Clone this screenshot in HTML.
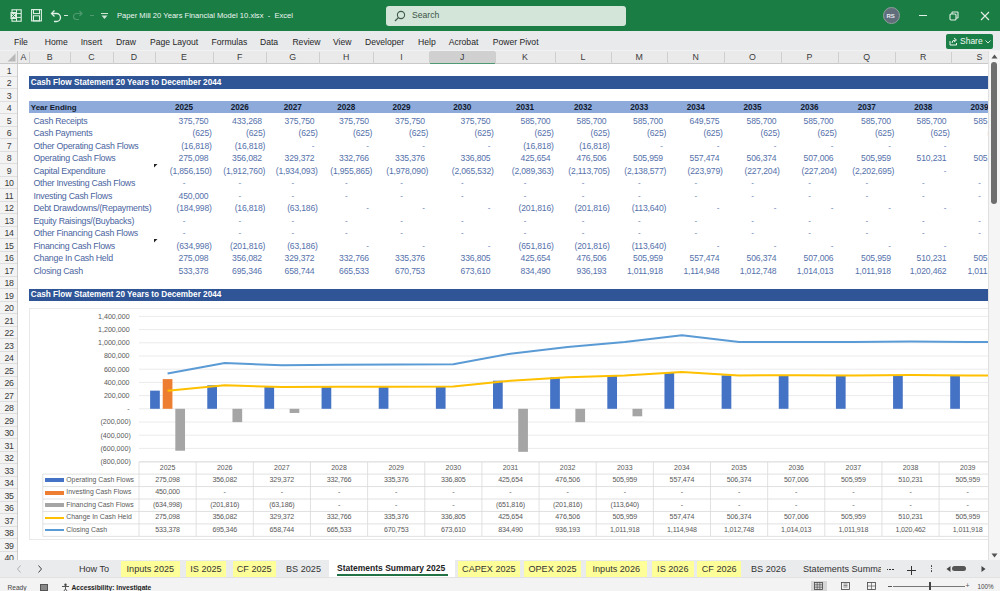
<!DOCTYPE html><html><head><meta charset="utf-8"><style>
*{margin:0;padding:0;box-sizing:border-box}
html,body{width:1000px;height:591px;overflow:hidden;background:#fff;font-family:"Liberation Sans",sans-serif}
.ab{position:absolute}
.t{position:absolute;white-space:pre;line-height:1}
</style></head><body>
<div class="ab" style="left:0;top:0;width:1000px;height:30.5px;background:#197d44"></div>
<svg class="ab" style="left:9px;top:9px" width="13" height="13" viewBox="0 0 13 13">
<rect x="3" y="0.8" width="9.2" height="11.4" fill="none" stroke="#dff0e5" stroke-width="1.1"/>
<line x1="7.5" y1="4.6" x2="12" y2="4.6" stroke="#dff0e5" stroke-width="1"/><line x1="7.5" y1="8.4" x2="12" y2="8.4" stroke="#dff0e5" stroke-width="1"/>
<line x1="7.5" y1="0.8" x2="7.5" y2="12.2" stroke="#dff0e5" stroke-width="1"/>
<rect x="1.5" y="3" width="6" height="7" fill="#dff0e5"/>
<path d="M3 4.8 L6 8.2 M6 4.8 L3 8.2" stroke="#197d44" stroke-width="1"/></svg>
<svg class="ab" style="left:31px;top:9px" width="11" height="12.5" viewBox="0 0 11 12.5">
<rect x="0.6" y="0.6" width="9.8" height="11.3" fill="none" stroke="#dff0e5" stroke-width="1.1"/>
<rect x="2.5" y="0.6" width="6" height="4" fill="none" stroke="#dff0e5" stroke-width="1"/>
<rect x="2.5" y="6.8" width="6" height="5.1" fill="none" stroke="#dff0e5" stroke-width="1"/></svg>
<svg class="ab" style="left:49.5px;top:9px" width="12" height="14" viewBox="0 0 12 14">
<path d="M2 4.5 H6.5 A4 4 0 0 1 6.5 12.5 H4" fill="none" stroke="#dff0e5" stroke-width="1.3"/>
<path d="M4.5 1.5 L1.5 4.5 L4.5 7.5" fill="none" stroke="#dff0e5" stroke-width="1.3"/></svg>
<div class="ab" style="left:64px;top:15px;width:3.5px;height:1px;background:#d8eadf"></div>
<svg class="ab" style="left:72px;top:9px" width="12" height="12" viewBox="0 0 12 12">
<path d="M9.5 4.5 H4.5 A3 3 0 0 0 4.5 10.5 H7" fill="none" stroke="#4f9a6e" stroke-width="1.2"/>
<path d="M7.5 2 L10 4.5 L7.5 7" fill="none" stroke="#4f9a6e" stroke-width="1.2"/></svg>
<div class="ab" style="left:90px;top:15px;width:3.5px;height:1px;background:#4f9a6e"></div>
<div class="ab" style="left:101px;top:12.5px;width:7px;height:1px;background:#cfe3d6"></div>
<svg class="ab" style="left:101px;top:14.5px" width="7" height="5" viewBox="0 0 7 5"><path d="M0.5 0.5 L3.5 4 L6.5 0.5Z" fill="#cfe3d6"/></svg>
<div class="t" style="left:117px;top:11.5px;font-size:7.6px;color:#eef6f1">Paper Mill 20 Years Financial Model 10.xlsx  -  Excel</div>
<div class="ab" style="left:385.5px;top:5.5px;width:240px;height:20px;background:#d3e4d9;border-radius:3px"></div>
<svg class="ab" style="left:394px;top:9.5px" width="12" height="12" viewBox="0 0 12 12">
<circle cx="7" cy="5" r="3.6" fill="none" stroke="#3d5a47" stroke-width="1.1"/><line x1="4.4" y1="7.6" x2="1" y2="11" stroke="#3d5a47" stroke-width="1.2"/></svg>
<div class="t" style="left:412px;top:11px;font-size:8.6px;color:#3b5545">Search</div>
<div class="ab" style="left:882.5px;top:7px;width:17px;height:17px;border-radius:50%;background:#5f6e7a;border:1.5px solid #8fa19a"></div>
<div class="t" style="left:886.5px;top:12.5px;font-size:6px;color:#e6ecef;font-weight:bold">RS</div>
<div class="ab" style="left:918.5px;top:15px;width:8px;height:1px;background:#e3f0e8"></div>
<svg class="ab" style="left:949px;top:10.5px" width="10" height="10" viewBox="0 0 10 10">
<rect x="1" y="3" width="6" height="6" fill="none" stroke="#e3f0e8" stroke-width="1.1" rx="1"/>
<path d="M3 3 V1.5 Q3 1 3.5 1 H8.5 Q9 1 9 1.5 V6.5 Q9 7 8.5 7 H7" fill="none" stroke="#e3f0e8" stroke-width="1.1"/></svg>
<svg class="ab" style="left:980px;top:10.5px" width="10" height="10" viewBox="0 0 10 10">
<path d="M1 1 L9 9 M9 1 L1 9" stroke="#e3f0e8" stroke-width="1.1"/></svg>
<div class="ab" style="left:0;top:30.5px;width:1000px;height:20.5px;background:#e9eaec"></div>
<div class="t" style="left:14px;top:37.6px;font-size:8.6px;color:#262626">File</div>
<div class="t" style="left:44.8px;top:37.6px;font-size:8.6px;color:#262626">Home</div>
<div class="t" style="left:80.7px;top:37.6px;font-size:8.6px;color:#262626">Insert</div>
<div class="t" style="left:116px;top:37.6px;font-size:8.6px;color:#262626">Draw</div>
<div class="t" style="left:150px;top:37.6px;font-size:8.6px;color:#262626">Page Layout</div>
<div class="t" style="left:211.5px;top:37.6px;font-size:8.6px;color:#262626">Formulas</div>
<div class="t" style="left:260px;top:37.6px;font-size:8.6px;color:#262626">Data</div>
<div class="t" style="left:292.4px;top:37.6px;font-size:8.6px;color:#262626">Review</div>
<div class="t" style="left:333px;top:37.6px;font-size:8.6px;color:#262626">View</div>
<div class="t" style="left:365px;top:37.6px;font-size:8.6px;color:#262626">Developer</div>
<div class="t" style="left:418px;top:37.6px;font-size:8.6px;color:#262626">Help</div>
<div class="t" style="left:448.7px;top:37.6px;font-size:8.6px;color:#262626">Acrobat</div>
<div class="t" style="left:492.7px;top:37.6px;font-size:8.6px;color:#262626">Power Pivot</div>
<div class="ab" style="left:946px;top:33.5px;width:46.5px;height:15px;background:#1a7f46;border-radius:2px"></div>
<svg class="ab" style="left:949px;top:36.5px" width="9" height="9" viewBox="0 0 9 9">
<path d="M1 4 V8 H7.5 V6" fill="none" stroke="#e9f4ed" stroke-width="1"/><path d="M3 6 Q3 3 6.5 3 M5 1 L7.5 3 L5 5" fill="none" stroke="#e9f4ed" stroke-width="1"/></svg>
<div class="t" style="left:960px;top:37px;font-size:8.5px;color:#f3faf5">Share</div>
<svg class="ab" style="left:985px;top:39.5px" width="6" height="4" viewBox="0 0 6 4"><path d="M0.5 0.5 L3 3 L5.5 0.5" fill="none" stroke="#e9f4ed" stroke-width="0.9"/></svg>
<div class="ab" style="left:0;top:49.5px;width:1000px;height:14.25px;background:#eaeaea;border-top:1.2px solid #f2f2f2;border-bottom:0.8px solid #c9c9c9"></div>
<svg class="ab" style="left:7px;top:53px" width="9" height="9" viewBox="0 0 9 9"><path d="M8.5 0.5 V8.5 H0.5Z" fill="#b8b8b8"/></svg>
<div class="ab" style="left:17px;top:51px;width:0.8px;height:12.75px;background:#c6c6c6"></div>
<div class="ab" style="left:28.9px;top:52px;width:0.8px;height:11.5px;background:#cfcfcf"></div>
<div class="t" style="left:17.5px;width:11.899999999999999px;text-align:center;top:53.2px;font-size:8.8px;color:#3a3a3a">A</div>
<div class="ab" style="left:69.5px;top:52px;width:0.8px;height:11.5px;background:#cfcfcf"></div>
<div class="t" style="left:29.4px;width:40.6px;text-align:center;top:53.2px;font-size:8.8px;color:#3a3a3a">B</div>
<div class="ab" style="left:112.5px;top:52px;width:0.8px;height:11.5px;background:#cfcfcf"></div>
<div class="t" style="left:70px;width:43px;text-align:center;top:53.2px;font-size:8.8px;color:#3a3a3a">C</div>
<div class="ab" style="left:154.5px;top:52px;width:0.8px;height:11.5px;background:#cfcfcf"></div>
<div class="t" style="left:113px;width:42px;text-align:center;top:53.2px;font-size:8.8px;color:#3a3a3a">D</div>
<div class="ab" style="left:212.5px;top:52px;width:0.8px;height:11.5px;background:#cfcfcf"></div>
<div class="t" style="left:155px;width:58px;text-align:center;top:53.2px;font-size:8.8px;color:#3a3a3a">E</div>
<div class="ab" style="left:266.0px;top:52px;width:0.8px;height:11.5px;background:#cfcfcf"></div>
<div class="t" style="left:213px;width:53.5px;text-align:center;top:53.2px;font-size:8.8px;color:#3a3a3a">F</div>
<div class="ab" style="left:318.5px;top:52px;width:0.8px;height:11.5px;background:#cfcfcf"></div>
<div class="t" style="left:266.5px;width:52.5px;text-align:center;top:53.2px;font-size:8.8px;color:#3a3a3a">G</div>
<div class="ab" style="left:373.0px;top:52px;width:0.8px;height:11.5px;background:#cfcfcf"></div>
<div class="t" style="left:319px;width:54.5px;text-align:center;top:53.2px;font-size:8.8px;color:#3a3a3a">H</div>
<div class="ab" style="left:429.0px;top:52px;width:0.8px;height:11.5px;background:#cfcfcf"></div>
<div class="t" style="left:373.5px;width:56.0px;text-align:center;top:53.2px;font-size:8.8px;color:#3a3a3a">I</div>
<div class="ab" style="left:429.5px;top:51px;width:65.5px;height:12.75px;background:#d0d0d0;border-bottom:1.6px solid #4f9a72"></div>
<div class="ab" style="left:494.5px;top:52px;width:0.8px;height:11.5px;background:#cfcfcf"></div>
<div class="t" style="left:429.5px;width:65.5px;text-align:center;top:53.2px;font-size:8.8px;color:#3a3a3a">J</div>
<div class="ab" style="left:554.5px;top:52px;width:0.8px;height:11.5px;background:#cfcfcf"></div>
<div class="t" style="left:495px;width:60px;text-align:center;top:53.2px;font-size:8.8px;color:#3a3a3a">K</div>
<div class="ab" style="left:610.5px;top:52px;width:0.8px;height:11.5px;background:#cfcfcf"></div>
<div class="t" style="left:555px;width:56px;text-align:center;top:53.2px;font-size:8.8px;color:#3a3a3a">L</div>
<div class="ab" style="left:667.0px;top:52px;width:0.8px;height:11.5px;background:#cfcfcf"></div>
<div class="t" style="left:611px;width:56.5px;text-align:center;top:53.2px;font-size:8.8px;color:#3a3a3a">M</div>
<div class="ab" style="left:723.5px;top:52px;width:0.8px;height:11.5px;background:#cfcfcf"></div>
<div class="t" style="left:667.5px;width:56.5px;text-align:center;top:53.2px;font-size:8.8px;color:#3a3a3a">N</div>
<div class="ab" style="left:780.5px;top:52px;width:0.8px;height:11.5px;background:#cfcfcf"></div>
<div class="t" style="left:724px;width:57px;text-align:center;top:53.2px;font-size:8.8px;color:#3a3a3a">O</div>
<div class="ab" style="left:837.5px;top:52px;width:0.8px;height:11.5px;background:#cfcfcf"></div>
<div class="t" style="left:781px;width:57px;text-align:center;top:53.2px;font-size:8.8px;color:#3a3a3a">P</div>
<div class="ab" style="left:895.0px;top:52px;width:0.8px;height:11.5px;background:#cfcfcf"></div>
<div class="t" style="left:838px;width:57.5px;text-align:center;top:53.2px;font-size:8.8px;color:#3a3a3a">Q</div>
<div class="ab" style="left:950.5px;top:52px;width:0.8px;height:11.5px;background:#cfcfcf"></div>
<div class="t" style="left:895.5px;width:55.5px;text-align:center;top:53.2px;font-size:8.8px;color:#3a3a3a">R</div>
<div class="ab" style="left:1007.5px;top:52px;width:0.8px;height:11.5px;background:#cfcfcf"></div>
<div class="t" style="left:951px;width:57px;text-align:center;top:53.2px;font-size:8.8px;color:#3a3a3a">S</div>
<div class="ab" style="left:0;top:63.75px;width:17.5px;height:496px;background:#f3f3f3;border-right:0.8px solid #cdcdcd"></div>
<div class="ab" style="left:0;top:75.75px;width:17px;height:0.7px;background:#dedede"></div>
<div class="t" style="left:0.5px;width:17px;text-align:center;top:66.65px;font-size:8.8px;letter-spacing:-0.4px;color:#3a3a3a">1</div>
<div class="ab" style="left:0;top:88.25px;width:17px;height:0.7px;background:#dedede"></div>
<div class="t" style="left:0.5px;width:17px;text-align:center;top:79.15px;font-size:8.8px;letter-spacing:-0.4px;color:#3a3a3a">2</div>
<div class="ab" style="left:0;top:100.75px;width:17px;height:0.7px;background:#dedede"></div>
<div class="t" style="left:0.5px;width:17px;text-align:center;top:91.65px;font-size:8.8px;letter-spacing:-0.4px;color:#3a3a3a">3</div>
<div class="ab" style="left:0;top:113.25px;width:17px;height:0.7px;background:#dedede"></div>
<div class="t" style="left:0.5px;width:17px;text-align:center;top:104.15px;font-size:8.8px;letter-spacing:-0.4px;color:#3a3a3a">4</div>
<div class="ab" style="left:0;top:125.75px;width:17px;height:0.7px;background:#dedede"></div>
<div class="t" style="left:0.5px;width:17px;text-align:center;top:116.65px;font-size:8.8px;letter-spacing:-0.4px;color:#3a3a3a">5</div>
<div class="ab" style="left:0;top:138.25px;width:17px;height:0.7px;background:#dedede"></div>
<div class="t" style="left:0.5px;width:17px;text-align:center;top:129.15px;font-size:8.8px;letter-spacing:-0.4px;color:#3a3a3a">6</div>
<div class="ab" style="left:0;top:150.75px;width:17px;height:0.7px;background:#dedede"></div>
<div class="t" style="left:0.5px;width:17px;text-align:center;top:141.65px;font-size:8.8px;letter-spacing:-0.4px;color:#3a3a3a">7</div>
<div class="ab" style="left:0;top:163.25px;width:17px;height:0.7px;background:#dedede"></div>
<div class="t" style="left:0.5px;width:17px;text-align:center;top:154.15px;font-size:8.8px;letter-spacing:-0.4px;color:#3a3a3a">8</div>
<div class="ab" style="left:0;top:175.75px;width:17px;height:0.7px;background:#dedede"></div>
<div class="t" style="left:0.5px;width:17px;text-align:center;top:166.65px;font-size:8.8px;letter-spacing:-0.4px;color:#3a3a3a">9</div>
<div class="ab" style="left:0;top:188.25px;width:17px;height:0.7px;background:#dedede"></div>
<div class="t" style="left:0.5px;width:17px;text-align:center;top:179.15px;font-size:8.8px;letter-spacing:-0.4px;color:#3a3a3a">10</div>
<div class="ab" style="left:0;top:200.75px;width:17px;height:0.7px;background:#dedede"></div>
<div class="t" style="left:0.5px;width:17px;text-align:center;top:191.65px;font-size:8.8px;letter-spacing:-0.4px;color:#3a3a3a">11</div>
<div class="ab" style="left:0;top:213.25px;width:17px;height:0.7px;background:#dedede"></div>
<div class="t" style="left:0.5px;width:17px;text-align:center;top:204.15px;font-size:8.8px;letter-spacing:-0.4px;color:#3a3a3a">12</div>
<div class="ab" style="left:0;top:225.75px;width:17px;height:0.7px;background:#dedede"></div>
<div class="t" style="left:0.5px;width:17px;text-align:center;top:216.65px;font-size:8.8px;letter-spacing:-0.4px;color:#3a3a3a">13</div>
<div class="ab" style="left:0;top:238.25px;width:17px;height:0.7px;background:#dedede"></div>
<div class="t" style="left:0.5px;width:17px;text-align:center;top:229.15px;font-size:8.8px;letter-spacing:-0.4px;color:#3a3a3a">14</div>
<div class="ab" style="left:0;top:250.75px;width:17px;height:0.7px;background:#dedede"></div>
<div class="t" style="left:0.5px;width:17px;text-align:center;top:241.65px;font-size:8.8px;letter-spacing:-0.4px;color:#3a3a3a">15</div>
<div class="ab" style="left:0;top:263.25px;width:17px;height:0.7px;background:#dedede"></div>
<div class="t" style="left:0.5px;width:17px;text-align:center;top:254.15px;font-size:8.8px;letter-spacing:-0.4px;color:#3a3a3a">16</div>
<div class="ab" style="left:0;top:275.75px;width:17px;height:0.7px;background:#dedede"></div>
<div class="t" style="left:0.5px;width:17px;text-align:center;top:266.65px;font-size:8.8px;letter-spacing:-0.4px;color:#3a3a3a">17</div>
<div class="ab" style="left:0;top:288.25px;width:17px;height:0.7px;background:#dedede"></div>
<div class="t" style="left:0.5px;width:17px;text-align:center;top:279.15px;font-size:8.8px;letter-spacing:-0.4px;color:#3a3a3a">18</div>
<div class="ab" style="left:0;top:300.75px;width:17px;height:0.7px;background:#dedede"></div>
<div class="t" style="left:0.5px;width:17px;text-align:center;top:291.65px;font-size:8.8px;letter-spacing:-0.4px;color:#3a3a3a">19</div>
<div class="ab" style="left:0;top:313.25px;width:17px;height:0.7px;background:#dedede"></div>
<div class="t" style="left:0.5px;width:17px;text-align:center;top:304.15px;font-size:8.8px;letter-spacing:-0.4px;color:#3a3a3a">20</div>
<div class="ab" style="left:0;top:325.75px;width:17px;height:0.7px;background:#dedede"></div>
<div class="t" style="left:0.5px;width:17px;text-align:center;top:316.65px;font-size:8.8px;letter-spacing:-0.4px;color:#3a3a3a">21</div>
<div class="ab" style="left:0;top:338.25px;width:17px;height:0.7px;background:#dedede"></div>
<div class="t" style="left:0.5px;width:17px;text-align:center;top:329.15px;font-size:8.8px;letter-spacing:-0.4px;color:#3a3a3a">22</div>
<div class="ab" style="left:0;top:350.75px;width:17px;height:0.7px;background:#dedede"></div>
<div class="t" style="left:0.5px;width:17px;text-align:center;top:341.65px;font-size:8.8px;letter-spacing:-0.4px;color:#3a3a3a">23</div>
<div class="ab" style="left:0;top:363.25px;width:17px;height:0.7px;background:#dedede"></div>
<div class="t" style="left:0.5px;width:17px;text-align:center;top:354.15px;font-size:8.8px;letter-spacing:-0.4px;color:#3a3a3a">24</div>
<div class="ab" style="left:0;top:375.75px;width:17px;height:0.7px;background:#dedede"></div>
<div class="t" style="left:0.5px;width:17px;text-align:center;top:366.65px;font-size:8.8px;letter-spacing:-0.4px;color:#3a3a3a">25</div>
<div class="ab" style="left:0;top:388.25px;width:17px;height:0.7px;background:#dedede"></div>
<div class="t" style="left:0.5px;width:17px;text-align:center;top:379.15px;font-size:8.8px;letter-spacing:-0.4px;color:#3a3a3a">26</div>
<div class="ab" style="left:0;top:400.75px;width:17px;height:0.7px;background:#dedede"></div>
<div class="t" style="left:0.5px;width:17px;text-align:center;top:391.65px;font-size:8.8px;letter-spacing:-0.4px;color:#3a3a3a">27</div>
<div class="ab" style="left:0;top:413.25px;width:17px;height:0.7px;background:#dedede"></div>
<div class="t" style="left:0.5px;width:17px;text-align:center;top:404.15px;font-size:8.8px;letter-spacing:-0.4px;color:#3a3a3a">28</div>
<div class="ab" style="left:0;top:425.75px;width:17px;height:0.7px;background:#dedede"></div>
<div class="t" style="left:0.5px;width:17px;text-align:center;top:416.65px;font-size:8.8px;letter-spacing:-0.4px;color:#3a3a3a">29</div>
<div class="ab" style="left:0;top:438.25px;width:17px;height:0.7px;background:#dedede"></div>
<div class="t" style="left:0.5px;width:17px;text-align:center;top:429.15px;font-size:8.8px;letter-spacing:-0.4px;color:#3a3a3a">30</div>
<div class="ab" style="left:0;top:450.75px;width:17px;height:0.7px;background:#dedede"></div>
<div class="t" style="left:0.5px;width:17px;text-align:center;top:441.65px;font-size:8.8px;letter-spacing:-0.4px;color:#3a3a3a">31</div>
<div class="ab" style="left:0;top:463.25px;width:17px;height:0.7px;background:#dedede"></div>
<div class="t" style="left:0.5px;width:17px;text-align:center;top:454.15px;font-size:8.8px;letter-spacing:-0.4px;color:#3a3a3a">32</div>
<div class="ab" style="left:0;top:475.75px;width:17px;height:0.7px;background:#dedede"></div>
<div class="t" style="left:0.5px;width:17px;text-align:center;top:466.65px;font-size:8.8px;letter-spacing:-0.4px;color:#3a3a3a">33</div>
<div class="ab" style="left:0;top:488.25px;width:17px;height:0.7px;background:#dedede"></div>
<div class="t" style="left:0.5px;width:17px;text-align:center;top:479.15px;font-size:8.8px;letter-spacing:-0.4px;color:#3a3a3a">34</div>
<div class="ab" style="left:0;top:500.75px;width:17px;height:0.7px;background:#dedede"></div>
<div class="t" style="left:0.5px;width:17px;text-align:center;top:491.65px;font-size:8.8px;letter-spacing:-0.4px;color:#3a3a3a">35</div>
<div class="ab" style="left:0;top:513.25px;width:17px;height:0.7px;background:#dedede"></div>
<div class="t" style="left:0.5px;width:17px;text-align:center;top:504.15px;font-size:8.8px;letter-spacing:-0.4px;color:#3a3a3a">36</div>
<div class="ab" style="left:0;top:525.75px;width:17px;height:0.7px;background:#dedede"></div>
<div class="t" style="left:0.5px;width:17px;text-align:center;top:516.65px;font-size:8.8px;letter-spacing:-0.4px;color:#3a3a3a">37</div>
<div class="ab" style="left:0;top:538.25px;width:17px;height:0.7px;background:#dedede"></div>
<div class="t" style="left:0.5px;width:17px;text-align:center;top:529.15px;font-size:8.8px;letter-spacing:-0.4px;color:#3a3a3a">38</div>
<div class="ab" style="left:0;top:550.75px;width:17px;height:0.7px;background:#dedede"></div>
<div class="t" style="left:0.5px;width:17px;text-align:center;top:541.65px;font-size:8.8px;letter-spacing:-0.4px;color:#3a3a3a">39</div>
<div class="ab" style="left:0;top:563.25px;width:17px;height:0.7px;background:#dedede"></div>
<div class="t" style="left:0.5px;width:17px;text-align:center;top:554.15px;font-size:8.8px;letter-spacing:-0.4px;color:#3a3a3a">40</div>
<div class="ab" style="left:17.8px;top:63.75px;width:970px;height:496px;overflow:hidden">
<div class="ab" style="left:11.2px;top:12.5px;width:980px;height:12.5px;background:#2f5597"></div>
<div class="t" style="left:13.0px;top:15.1px;font-size:8.2px;font-weight:bold;color:#fff">Cash Flow Statement 20 Years to December 2044</div>
<div class="ab" style="left:11.2px;top:37.5px;width:980px;height:11.8px;background:#8eaadb"></div>
<div class="t" style="left:13.0px;top:40.1px;font-size:7.95px;font-weight:bold;color:#111a2e">Year Ending</div>
<div class="t" style="left:137.2px;width:58px;text-align:center;top:40.1px;font-size:8.2px;font-weight:bold;color:#111a2e">2025</div>
<div class="t" style="left:195.2px;width:53.5px;text-align:center;top:40.1px;font-size:8.2px;font-weight:bold;color:#111a2e">2026</div>
<div class="t" style="left:248.7px;width:52.5px;text-align:center;top:40.1px;font-size:8.2px;font-weight:bold;color:#111a2e">2027</div>
<div class="t" style="left:301.2px;width:54.5px;text-align:center;top:40.1px;font-size:8.2px;font-weight:bold;color:#111a2e">2028</div>
<div class="t" style="left:355.7px;width:56.0px;text-align:center;top:40.1px;font-size:8.2px;font-weight:bold;color:#111a2e">2029</div>
<div class="t" style="left:411.7px;width:65.5px;text-align:center;top:40.1px;font-size:8.2px;font-weight:bold;color:#111a2e">2030</div>
<div class="t" style="left:477.2px;width:60px;text-align:center;top:40.1px;font-size:8.2px;font-weight:bold;color:#111a2e">2031</div>
<div class="t" style="left:537.2px;width:56px;text-align:center;top:40.1px;font-size:8.2px;font-weight:bold;color:#111a2e">2032</div>
<div class="t" style="left:593.2px;width:56.5px;text-align:center;top:40.1px;font-size:8.2px;font-weight:bold;color:#111a2e">2033</div>
<div class="t" style="left:649.7px;width:56.5px;text-align:center;top:40.1px;font-size:8.2px;font-weight:bold;color:#111a2e">2034</div>
<div class="t" style="left:706.2px;width:57px;text-align:center;top:40.1px;font-size:8.2px;font-weight:bold;color:#111a2e">2035</div>
<div class="t" style="left:763.2px;width:57px;text-align:center;top:40.1px;font-size:8.2px;font-weight:bold;color:#111a2e">2036</div>
<div class="t" style="left:820.2px;width:57.5px;text-align:center;top:40.1px;font-size:8.2px;font-weight:bold;color:#111a2e">2037</div>
<div class="t" style="left:877.7px;width:55.5px;text-align:center;top:40.1px;font-size:8.2px;font-weight:bold;color:#111a2e">2038</div>
<div class="t" style="left:933.2px;width:57px;text-align:center;top:40.1px;font-size:8.2px;font-weight:bold;color:#111a2e">2039</div>
<div class="t" style="left:15.7px;top:52.9px;width:118.30000000000001px;height:11px;overflow:hidden;font-size:8.8px;letter-spacing:-0.25px;color:#4a64a0">Cash Receipts</div>
<div class="t" style="left:127.19999999999999px;width:63.5px;text-align:right;top:52.9px;font-size:8.6px;letter-spacing:-0.17px;color:#5571ab">375,750</div>
<div class="t" style="left:185.2px;width:59.0px;text-align:right;top:52.9px;font-size:8.6px;letter-spacing:-0.17px;color:#5571ab">433,268</div>
<div class="t" style="left:238.7px;width:58.0px;text-align:right;top:52.9px;font-size:8.6px;letter-spacing:-0.17px;color:#5571ab">375,750</div>
<div class="t" style="left:291.2px;width:60.0px;text-align:right;top:52.9px;font-size:8.6px;letter-spacing:-0.17px;color:#5571ab">375,750</div>
<div class="t" style="left:345.7px;width:61.5px;text-align:right;top:52.9px;font-size:8.6px;letter-spacing:-0.17px;color:#5571ab">375,750</div>
<div class="t" style="left:401.7px;width:71.0px;text-align:right;top:52.9px;font-size:8.6px;letter-spacing:-0.17px;color:#5571ab">375,750</div>
<div class="t" style="left:467.2px;width:65.5px;text-align:right;top:52.9px;font-size:8.6px;letter-spacing:-0.17px;color:#5571ab">585,700</div>
<div class="t" style="left:527.2px;width:61.5px;text-align:right;top:52.9px;font-size:8.6px;letter-spacing:-0.17px;color:#5571ab">585,700</div>
<div class="t" style="left:583.2px;width:62.0px;text-align:right;top:52.9px;font-size:8.6px;letter-spacing:-0.17px;color:#5571ab">585,700</div>
<div class="t" style="left:639.7px;width:62.0px;text-align:right;top:52.9px;font-size:8.6px;letter-spacing:-0.17px;color:#5571ab">649,575</div>
<div class="t" style="left:696.2px;width:62.5px;text-align:right;top:52.9px;font-size:8.6px;letter-spacing:-0.17px;color:#5571ab">585,700</div>
<div class="t" style="left:753.2px;width:62.5px;text-align:right;top:52.9px;font-size:8.6px;letter-spacing:-0.17px;color:#5571ab">585,700</div>
<div class="t" style="left:810.2px;width:63.0px;text-align:right;top:52.9px;font-size:8.6px;letter-spacing:-0.17px;color:#5571ab">585,700</div>
<div class="t" style="left:867.7px;width:61.0px;text-align:right;top:52.9px;font-size:8.6px;letter-spacing:-0.17px;color:#5571ab">585,700</div>
<div class="t" style="left:923.2px;width:62.5px;text-align:right;top:52.9px;font-size:8.6px;letter-spacing:-0.17px;color:#5571ab">585,700</div>
<div class="t" style="left:15.7px;top:65.4px;width:118.30000000000001px;height:11px;overflow:hidden;font-size:8.8px;letter-spacing:-0.25px;color:#4a64a0">Cash Payments</div>
<div class="t" style="left:127.19999999999999px;width:66.8px;text-align:right;top:65.4px;font-size:8.6px;letter-spacing:-0.17px;color:#5571ab">(625)</div>
<div class="t" style="left:185.2px;width:62.3px;text-align:right;top:65.4px;font-size:8.6px;letter-spacing:-0.17px;color:#5571ab">(625)</div>
<div class="t" style="left:238.7px;width:61.3px;text-align:right;top:65.4px;font-size:8.6px;letter-spacing:-0.17px;color:#5571ab">(625)</div>
<div class="t" style="left:291.2px;width:63.3px;text-align:right;top:65.4px;font-size:8.6px;letter-spacing:-0.17px;color:#5571ab">(625)</div>
<div class="t" style="left:345.7px;width:64.8px;text-align:right;top:65.4px;font-size:8.6px;letter-spacing:-0.17px;color:#5571ab">(625)</div>
<div class="t" style="left:401.7px;width:74.3px;text-align:right;top:65.4px;font-size:8.6px;letter-spacing:-0.17px;color:#5571ab">(625)</div>
<div class="t" style="left:467.2px;width:68.8px;text-align:right;top:65.4px;font-size:8.6px;letter-spacing:-0.17px;color:#5571ab">(625)</div>
<div class="t" style="left:527.2px;width:64.8px;text-align:right;top:65.4px;font-size:8.6px;letter-spacing:-0.17px;color:#5571ab">(625)</div>
<div class="t" style="left:583.2px;width:65.3px;text-align:right;top:65.4px;font-size:8.6px;letter-spacing:-0.17px;color:#5571ab">(625)</div>
<div class="t" style="left:639.7px;width:65.3px;text-align:right;top:65.4px;font-size:8.6px;letter-spacing:-0.17px;color:#5571ab">(625)</div>
<div class="t" style="left:696.2px;width:65.8px;text-align:right;top:65.4px;font-size:8.6px;letter-spacing:-0.17px;color:#5571ab">(625)</div>
<div class="t" style="left:753.2px;width:65.8px;text-align:right;top:65.4px;font-size:8.6px;letter-spacing:-0.17px;color:#5571ab">(625)</div>
<div class="t" style="left:810.2px;width:66.3px;text-align:right;top:65.4px;font-size:8.6px;letter-spacing:-0.17px;color:#5571ab">(625)</div>
<div class="t" style="left:867.7px;width:64.3px;text-align:right;top:65.4px;font-size:8.6px;letter-spacing:-0.17px;color:#5571ab">(625)</div>
<div class="t" style="left:923.2px;width:65.8px;text-align:right;top:65.4px;font-size:8.6px;letter-spacing:-0.17px;color:#5571ab">(625)</div>
<div class="t" style="left:15.7px;top:77.9px;width:118.30000000000001px;height:11px;overflow:hidden;font-size:8.8px;letter-spacing:-0.25px;color:#4a64a0">Other Operating Cash Flows</div>
<div class="t" style="left:127.19999999999999px;width:66.8px;text-align:right;top:77.9px;font-size:8.6px;letter-spacing:-0.17px;color:#5571ab">(16,818)</div>
<div class="t" style="left:185.2px;width:62.3px;text-align:right;top:77.9px;font-size:8.6px;letter-spacing:-0.17px;color:#5571ab">(16,818)</div>
<div class="t" style="left:248.7px;width:48.0px;text-align:right;top:77.9px;font-size:8px;color:#5571ab">-</div>
<div class="t" style="left:301.2px;width:50.0px;text-align:right;top:77.9px;font-size:8px;color:#5571ab">-</div>
<div class="t" style="left:355.7px;width:51.5px;text-align:right;top:77.9px;font-size:8px;color:#5571ab">-</div>
<div class="t" style="left:411.7px;width:61.0px;text-align:right;top:77.9px;font-size:8px;color:#5571ab">-</div>
<div class="t" style="left:467.2px;width:68.8px;text-align:right;top:77.9px;font-size:8.6px;letter-spacing:-0.17px;color:#5571ab">(16,818)</div>
<div class="t" style="left:527.2px;width:64.8px;text-align:right;top:77.9px;font-size:8.6px;letter-spacing:-0.17px;color:#5571ab">(16,818)</div>
<div class="t" style="left:593.2px;width:52.0px;text-align:right;top:77.9px;font-size:8px;color:#5571ab">-</div>
<div class="t" style="left:649.7px;width:52.0px;text-align:right;top:77.9px;font-size:8px;color:#5571ab">-</div>
<div class="t" style="left:706.2px;width:52.5px;text-align:right;top:77.9px;font-size:8px;color:#5571ab">-</div>
<div class="t" style="left:763.2px;width:52.5px;text-align:right;top:77.9px;font-size:8px;color:#5571ab">-</div>
<div class="t" style="left:820.2px;width:53.0px;text-align:right;top:77.9px;font-size:8px;color:#5571ab">-</div>
<div class="t" style="left:877.7px;width:51.0px;text-align:right;top:77.9px;font-size:8px;color:#5571ab">-</div>
<div class="t" style="left:933.2px;width:52.5px;text-align:right;top:77.9px;font-size:8px;color:#5571ab">-</div>
<div class="t" style="left:15.7px;top:90.4px;width:118.30000000000001px;height:11px;overflow:hidden;font-size:8.8px;letter-spacing:-0.25px;color:#4a64a0">Operating Cash Flows</div>
<div class="t" style="left:127.19999999999999px;width:63.5px;text-align:right;top:90.4px;font-size:8.6px;letter-spacing:-0.17px;color:#5571ab">275,098</div>
<div class="t" style="left:185.2px;width:59.0px;text-align:right;top:90.4px;font-size:8.6px;letter-spacing:-0.17px;color:#5571ab">356,082</div>
<div class="t" style="left:238.7px;width:58.0px;text-align:right;top:90.4px;font-size:8.6px;letter-spacing:-0.17px;color:#5571ab">329,372</div>
<div class="t" style="left:291.2px;width:60.0px;text-align:right;top:90.4px;font-size:8.6px;letter-spacing:-0.17px;color:#5571ab">332,766</div>
<div class="t" style="left:345.7px;width:61.5px;text-align:right;top:90.4px;font-size:8.6px;letter-spacing:-0.17px;color:#5571ab">335,376</div>
<div class="t" style="left:401.7px;width:71.0px;text-align:right;top:90.4px;font-size:8.6px;letter-spacing:-0.17px;color:#5571ab">336,805</div>
<div class="t" style="left:467.2px;width:65.5px;text-align:right;top:90.4px;font-size:8.6px;letter-spacing:-0.17px;color:#5571ab">425,654</div>
<div class="t" style="left:527.2px;width:61.5px;text-align:right;top:90.4px;font-size:8.6px;letter-spacing:-0.17px;color:#5571ab">476,506</div>
<div class="t" style="left:583.2px;width:62.0px;text-align:right;top:90.4px;font-size:8.6px;letter-spacing:-0.17px;color:#5571ab">505,959</div>
<div class="t" style="left:639.7px;width:62.0px;text-align:right;top:90.4px;font-size:8.6px;letter-spacing:-0.17px;color:#5571ab">557,474</div>
<div class="t" style="left:696.2px;width:62.5px;text-align:right;top:90.4px;font-size:8.6px;letter-spacing:-0.17px;color:#5571ab">506,374</div>
<div class="t" style="left:753.2px;width:62.5px;text-align:right;top:90.4px;font-size:8.6px;letter-spacing:-0.17px;color:#5571ab">507,006</div>
<div class="t" style="left:810.2px;width:63.0px;text-align:right;top:90.4px;font-size:8.6px;letter-spacing:-0.17px;color:#5571ab">505,959</div>
<div class="t" style="left:867.7px;width:61.0px;text-align:right;top:90.4px;font-size:8.6px;letter-spacing:-0.17px;color:#5571ab">510,231</div>
<div class="t" style="left:923.2px;width:62.5px;text-align:right;top:90.4px;font-size:8.6px;letter-spacing:-0.17px;color:#5571ab">505,959</div>
<div class="t" style="left:15.7px;top:102.9px;width:118.30000000000001px;height:11px;overflow:hidden;font-size:8.8px;letter-spacing:-0.25px;color:#4a64a0">Capital Expenditure</div>
<div class="t" style="left:127.19999999999999px;width:66.8px;text-align:right;top:102.9px;font-size:8.6px;letter-spacing:-0.17px;color:#5571ab">(1,856,150)</div>
<div class="t" style="left:185.2px;width:62.3px;text-align:right;top:102.9px;font-size:8.6px;letter-spacing:-0.17px;color:#5571ab">(1,912,760)</div>
<div class="t" style="left:238.7px;width:61.3px;text-align:right;top:102.9px;font-size:8.6px;letter-spacing:-0.17px;color:#5571ab">(1,934,093)</div>
<div class="t" style="left:291.2px;width:63.3px;text-align:right;top:102.9px;font-size:8.6px;letter-spacing:-0.17px;color:#5571ab">(1,955,865)</div>
<div class="t" style="left:345.7px;width:64.8px;text-align:right;top:102.9px;font-size:8.6px;letter-spacing:-0.17px;color:#5571ab">(1,978,090)</div>
<div class="t" style="left:401.7px;width:74.3px;text-align:right;top:102.9px;font-size:8.6px;letter-spacing:-0.17px;color:#5571ab">(2,065,532)</div>
<div class="t" style="left:467.2px;width:68.8px;text-align:right;top:102.9px;font-size:8.6px;letter-spacing:-0.17px;color:#5571ab">(2,089,363)</div>
<div class="t" style="left:527.2px;width:64.8px;text-align:right;top:102.9px;font-size:8.6px;letter-spacing:-0.17px;color:#5571ab">(2,113,705)</div>
<div class="t" style="left:583.2px;width:65.3px;text-align:right;top:102.9px;font-size:8.6px;letter-spacing:-0.17px;color:#5571ab">(2,138,577)</div>
<div class="t" style="left:639.7px;width:65.3px;text-align:right;top:102.9px;font-size:8.6px;letter-spacing:-0.17px;color:#5571ab">(223,979)</div>
<div class="t" style="left:696.2px;width:65.8px;text-align:right;top:102.9px;font-size:8.6px;letter-spacing:-0.17px;color:#5571ab">(227,204)</div>
<div class="t" style="left:753.2px;width:65.8px;text-align:right;top:102.9px;font-size:8.6px;letter-spacing:-0.17px;color:#5571ab">(227,204)</div>
<div class="t" style="left:810.2px;width:66.3px;text-align:right;top:102.9px;font-size:8.6px;letter-spacing:-0.17px;color:#5571ab">(2,202,695)</div>
<div class="t" style="left:877.7px;width:51.0px;text-align:right;top:102.9px;font-size:8px;color:#5571ab">-</div>
<div class="t" style="left:933.2px;width:52.5px;text-align:right;top:102.9px;font-size:8px;color:#5571ab">-</div>
<div class="t" style="left:15.7px;top:115.4px;width:118.30000000000001px;height:11px;overflow:hidden;font-size:8.8px;letter-spacing:-0.25px;color:#4a64a0">Other Investing Cash Flows</div>
<div class="t" style="left:137.2px;width:58px;text-align:center;top:115.4px;font-size:8px;color:#5571ab">-</div>
<div class="t" style="left:195.2px;width:53.5px;text-align:center;top:115.4px;font-size:8px;color:#5571ab">-</div>
<div class="t" style="left:248.7px;width:52.5px;text-align:center;top:115.4px;font-size:8px;color:#5571ab">-</div>
<div class="t" style="left:301.2px;width:54.5px;text-align:center;top:115.4px;font-size:8px;color:#5571ab">-</div>
<div class="t" style="left:355.7px;width:56.0px;text-align:center;top:115.4px;font-size:8px;color:#5571ab">-</div>
<div class="t" style="left:411.7px;width:65.5px;text-align:center;top:115.4px;font-size:8px;color:#5571ab">-</div>
<div class="t" style="left:477.2px;width:60px;text-align:center;top:115.4px;font-size:8px;color:#5571ab">-</div>
<div class="t" style="left:537.2px;width:56px;text-align:center;top:115.4px;font-size:8px;color:#5571ab">-</div>
<div class="t" style="left:593.2px;width:56.5px;text-align:center;top:115.4px;font-size:8px;color:#5571ab">-</div>
<div class="t" style="left:649.7px;width:56.5px;text-align:center;top:115.4px;font-size:8px;color:#5571ab">-</div>
<div class="t" style="left:706.2px;width:57px;text-align:center;top:115.4px;font-size:8px;color:#5571ab">-</div>
<div class="t" style="left:763.2px;width:57px;text-align:center;top:115.4px;font-size:8px;color:#5571ab">-</div>
<div class="t" style="left:820.2px;width:57.5px;text-align:center;top:115.4px;font-size:8px;color:#5571ab">-</div>
<div class="t" style="left:877.7px;width:55.5px;text-align:center;top:115.4px;font-size:8px;color:#5571ab">-</div>
<div class="t" style="left:933.2px;width:57px;text-align:center;top:115.4px;font-size:8px;color:#5571ab">-</div>
<div class="t" style="left:15.7px;top:127.9px;width:118.30000000000001px;height:11px;overflow:hidden;font-size:8.8px;letter-spacing:-0.25px;color:#4a64a0">Investing Cash Flows</div>
<div class="t" style="left:127.19999999999999px;width:63.5px;text-align:right;top:127.9px;font-size:8.6px;letter-spacing:-0.17px;color:#5571ab">450,000</div>
<div class="t" style="left:195.2px;width:53.5px;text-align:center;top:127.9px;font-size:8px;color:#5571ab">-</div>
<div class="t" style="left:248.7px;width:52.5px;text-align:center;top:127.9px;font-size:8px;color:#5571ab">-</div>
<div class="t" style="left:301.2px;width:54.5px;text-align:center;top:127.9px;font-size:8px;color:#5571ab">-</div>
<div class="t" style="left:355.7px;width:56.0px;text-align:center;top:127.9px;font-size:8px;color:#5571ab">-</div>
<div class="t" style="left:411.7px;width:65.5px;text-align:center;top:127.9px;font-size:8px;color:#5571ab">-</div>
<div class="t" style="left:477.2px;width:60px;text-align:center;top:127.9px;font-size:8px;color:#5571ab">-</div>
<div class="t" style="left:537.2px;width:56px;text-align:center;top:127.9px;font-size:8px;color:#5571ab">-</div>
<div class="t" style="left:593.2px;width:56.5px;text-align:center;top:127.9px;font-size:8px;color:#5571ab">-</div>
<div class="t" style="left:649.7px;width:56.5px;text-align:center;top:127.9px;font-size:8px;color:#5571ab">-</div>
<div class="t" style="left:706.2px;width:57px;text-align:center;top:127.9px;font-size:8px;color:#5571ab">-</div>
<div class="t" style="left:763.2px;width:57px;text-align:center;top:127.9px;font-size:8px;color:#5571ab">-</div>
<div class="t" style="left:820.2px;width:57.5px;text-align:center;top:127.9px;font-size:8px;color:#5571ab">-</div>
<div class="t" style="left:877.7px;width:55.5px;text-align:center;top:127.9px;font-size:8px;color:#5571ab">-</div>
<div class="t" style="left:933.2px;width:57px;text-align:center;top:127.9px;font-size:8px;color:#5571ab">-</div>
<div class="t" style="left:15.7px;top:140.4px;width:118.30000000000001px;height:11px;overflow:hidden;font-size:8.8px;letter-spacing:-0.25px;color:#4a64a0">Debt Drawdowns/(Repayments)</div>
<div class="t" style="left:127.19999999999999px;width:66.8px;text-align:right;top:140.4px;font-size:8.6px;letter-spacing:-0.17px;color:#5571ab">(184,998)</div>
<div class="t" style="left:185.2px;width:62.3px;text-align:right;top:140.4px;font-size:8.6px;letter-spacing:-0.17px;color:#5571ab">(16,818)</div>
<div class="t" style="left:238.7px;width:61.3px;text-align:right;top:140.4px;font-size:8.6px;letter-spacing:-0.17px;color:#5571ab">(63,186)</div>
<div class="t" style="left:301.2px;width:50.0px;text-align:right;top:140.4px;font-size:8px;color:#5571ab">-</div>
<div class="t" style="left:355.7px;width:51.5px;text-align:right;top:140.4px;font-size:8px;color:#5571ab">-</div>
<div class="t" style="left:411.7px;width:61.0px;text-align:right;top:140.4px;font-size:8px;color:#5571ab">-</div>
<div class="t" style="left:467.2px;width:68.8px;text-align:right;top:140.4px;font-size:8.6px;letter-spacing:-0.17px;color:#5571ab">(201,816)</div>
<div class="t" style="left:527.2px;width:64.8px;text-align:right;top:140.4px;font-size:8.6px;letter-spacing:-0.17px;color:#5571ab">(201,816)</div>
<div class="t" style="left:583.2px;width:65.3px;text-align:right;top:140.4px;font-size:8.6px;letter-spacing:-0.17px;color:#5571ab">(113,640)</div>
<div class="t" style="left:649.7px;width:52.0px;text-align:right;top:140.4px;font-size:8px;color:#5571ab">-</div>
<div class="t" style="left:706.2px;width:52.5px;text-align:right;top:140.4px;font-size:8px;color:#5571ab">-</div>
<div class="t" style="left:763.2px;width:52.5px;text-align:right;top:140.4px;font-size:8px;color:#5571ab">-</div>
<div class="t" style="left:820.2px;width:53.0px;text-align:right;top:140.4px;font-size:8px;color:#5571ab">-</div>
<div class="t" style="left:877.7px;width:51.0px;text-align:right;top:140.4px;font-size:8px;color:#5571ab">-</div>
<div class="t" style="left:933.2px;width:52.5px;text-align:right;top:140.4px;font-size:8px;color:#5571ab">-</div>
<div class="t" style="left:15.7px;top:152.9px;width:118.30000000000001px;height:11px;overflow:hidden;font-size:8.8px;letter-spacing:-0.25px;color:#4a64a0">Equity Raisings/(Buybacks)</div>
<div class="t" style="left:137.2px;width:58px;text-align:center;top:152.9px;font-size:8px;color:#5571ab">-</div>
<div class="t" style="left:195.2px;width:53.5px;text-align:center;top:152.9px;font-size:8px;color:#5571ab">-</div>
<div class="t" style="left:248.7px;width:52.5px;text-align:center;top:152.9px;font-size:8px;color:#5571ab">-</div>
<div class="t" style="left:301.2px;width:54.5px;text-align:center;top:152.9px;font-size:8px;color:#5571ab">-</div>
<div class="t" style="left:355.7px;width:56.0px;text-align:center;top:152.9px;font-size:8px;color:#5571ab">-</div>
<div class="t" style="left:411.7px;width:65.5px;text-align:center;top:152.9px;font-size:8px;color:#5571ab">-</div>
<div class="t" style="left:477.2px;width:60px;text-align:center;top:152.9px;font-size:8px;color:#5571ab">-</div>
<div class="t" style="left:537.2px;width:56px;text-align:center;top:152.9px;font-size:8px;color:#5571ab">-</div>
<div class="t" style="left:593.2px;width:56.5px;text-align:center;top:152.9px;font-size:8px;color:#5571ab">-</div>
<div class="t" style="left:649.7px;width:56.5px;text-align:center;top:152.9px;font-size:8px;color:#5571ab">-</div>
<div class="t" style="left:706.2px;width:57px;text-align:center;top:152.9px;font-size:8px;color:#5571ab">-</div>
<div class="t" style="left:763.2px;width:57px;text-align:center;top:152.9px;font-size:8px;color:#5571ab">-</div>
<div class="t" style="left:820.2px;width:57.5px;text-align:center;top:152.9px;font-size:8px;color:#5571ab">-</div>
<div class="t" style="left:877.7px;width:55.5px;text-align:center;top:152.9px;font-size:8px;color:#5571ab">-</div>
<div class="t" style="left:933.2px;width:57px;text-align:center;top:152.9px;font-size:8px;color:#5571ab">-</div>
<div class="t" style="left:15.7px;top:165.4px;width:118.30000000000001px;height:11px;overflow:hidden;font-size:8.8px;letter-spacing:-0.25px;color:#4a64a0">Other Financing Cash Flows</div>
<div class="t" style="left:137.2px;width:58px;text-align:center;top:165.4px;font-size:8px;color:#5571ab">-</div>
<div class="t" style="left:195.2px;width:53.5px;text-align:center;top:165.4px;font-size:8px;color:#5571ab">-</div>
<div class="t" style="left:248.7px;width:52.5px;text-align:center;top:165.4px;font-size:8px;color:#5571ab">-</div>
<div class="t" style="left:301.2px;width:54.5px;text-align:center;top:165.4px;font-size:8px;color:#5571ab">-</div>
<div class="t" style="left:355.7px;width:56.0px;text-align:center;top:165.4px;font-size:8px;color:#5571ab">-</div>
<div class="t" style="left:411.7px;width:65.5px;text-align:center;top:165.4px;font-size:8px;color:#5571ab">-</div>
<div class="t" style="left:477.2px;width:60px;text-align:center;top:165.4px;font-size:8px;color:#5571ab">-</div>
<div class="t" style="left:537.2px;width:56px;text-align:center;top:165.4px;font-size:8px;color:#5571ab">-</div>
<div class="t" style="left:593.2px;width:56.5px;text-align:center;top:165.4px;font-size:8px;color:#5571ab">-</div>
<div class="t" style="left:649.7px;width:56.5px;text-align:center;top:165.4px;font-size:8px;color:#5571ab">-</div>
<div class="t" style="left:706.2px;width:57px;text-align:center;top:165.4px;font-size:8px;color:#5571ab">-</div>
<div class="t" style="left:763.2px;width:57px;text-align:center;top:165.4px;font-size:8px;color:#5571ab">-</div>
<div class="t" style="left:820.2px;width:57.5px;text-align:center;top:165.4px;font-size:8px;color:#5571ab">-</div>
<div class="t" style="left:877.7px;width:55.5px;text-align:center;top:165.4px;font-size:8px;color:#5571ab">-</div>
<div class="t" style="left:933.2px;width:57px;text-align:center;top:165.4px;font-size:8px;color:#5571ab">-</div>
<div class="t" style="left:15.7px;top:177.9px;width:118.30000000000001px;height:11px;overflow:hidden;font-size:8.8px;letter-spacing:-0.25px;color:#4a64a0">Financing Cash Flows</div>
<div class="t" style="left:127.19999999999999px;width:66.8px;text-align:right;top:177.9px;font-size:8.6px;letter-spacing:-0.17px;color:#5571ab">(634,998)</div>
<div class="t" style="left:185.2px;width:62.3px;text-align:right;top:177.9px;font-size:8.6px;letter-spacing:-0.17px;color:#5571ab">(201,816)</div>
<div class="t" style="left:238.7px;width:61.3px;text-align:right;top:177.9px;font-size:8.6px;letter-spacing:-0.17px;color:#5571ab">(63,186)</div>
<div class="t" style="left:301.2px;width:50.0px;text-align:right;top:177.9px;font-size:8px;color:#5571ab">-</div>
<div class="t" style="left:355.7px;width:51.5px;text-align:right;top:177.9px;font-size:8px;color:#5571ab">-</div>
<div class="t" style="left:411.7px;width:61.0px;text-align:right;top:177.9px;font-size:8px;color:#5571ab">-</div>
<div class="t" style="left:467.2px;width:68.8px;text-align:right;top:177.9px;font-size:8.6px;letter-spacing:-0.17px;color:#5571ab">(651,816)</div>
<div class="t" style="left:527.2px;width:64.8px;text-align:right;top:177.9px;font-size:8.6px;letter-spacing:-0.17px;color:#5571ab">(201,816)</div>
<div class="t" style="left:583.2px;width:65.3px;text-align:right;top:177.9px;font-size:8.6px;letter-spacing:-0.17px;color:#5571ab">(113,640)</div>
<div class="t" style="left:649.7px;width:52.0px;text-align:right;top:177.9px;font-size:8px;color:#5571ab">-</div>
<div class="t" style="left:706.2px;width:52.5px;text-align:right;top:177.9px;font-size:8px;color:#5571ab">-</div>
<div class="t" style="left:763.2px;width:52.5px;text-align:right;top:177.9px;font-size:8px;color:#5571ab">-</div>
<div class="t" style="left:820.2px;width:53.0px;text-align:right;top:177.9px;font-size:8px;color:#5571ab">-</div>
<div class="t" style="left:877.7px;width:51.0px;text-align:right;top:177.9px;font-size:8px;color:#5571ab">-</div>
<div class="t" style="left:933.2px;width:52.5px;text-align:right;top:177.9px;font-size:8px;color:#5571ab">-</div>
<div class="t" style="left:15.7px;top:190.4px;width:118.30000000000001px;height:11px;overflow:hidden;font-size:8.8px;letter-spacing:-0.25px;color:#4a64a0">Change In Cash Held</div>
<div class="t" style="left:127.19999999999999px;width:63.5px;text-align:right;top:190.4px;font-size:8.6px;letter-spacing:-0.17px;color:#5571ab">275,098</div>
<div class="t" style="left:185.2px;width:59.0px;text-align:right;top:190.4px;font-size:8.6px;letter-spacing:-0.17px;color:#5571ab">356,082</div>
<div class="t" style="left:238.7px;width:58.0px;text-align:right;top:190.4px;font-size:8.6px;letter-spacing:-0.17px;color:#5571ab">329,372</div>
<div class="t" style="left:291.2px;width:60.0px;text-align:right;top:190.4px;font-size:8.6px;letter-spacing:-0.17px;color:#5571ab">332,766</div>
<div class="t" style="left:345.7px;width:61.5px;text-align:right;top:190.4px;font-size:8.6px;letter-spacing:-0.17px;color:#5571ab">335,376</div>
<div class="t" style="left:401.7px;width:71.0px;text-align:right;top:190.4px;font-size:8.6px;letter-spacing:-0.17px;color:#5571ab">336,805</div>
<div class="t" style="left:467.2px;width:65.5px;text-align:right;top:190.4px;font-size:8.6px;letter-spacing:-0.17px;color:#5571ab">425,654</div>
<div class="t" style="left:527.2px;width:61.5px;text-align:right;top:190.4px;font-size:8.6px;letter-spacing:-0.17px;color:#5571ab">476,506</div>
<div class="t" style="left:583.2px;width:62.0px;text-align:right;top:190.4px;font-size:8.6px;letter-spacing:-0.17px;color:#5571ab">505,959</div>
<div class="t" style="left:639.7px;width:62.0px;text-align:right;top:190.4px;font-size:8.6px;letter-spacing:-0.17px;color:#5571ab">557,474</div>
<div class="t" style="left:696.2px;width:62.5px;text-align:right;top:190.4px;font-size:8.6px;letter-spacing:-0.17px;color:#5571ab">506,374</div>
<div class="t" style="left:753.2px;width:62.5px;text-align:right;top:190.4px;font-size:8.6px;letter-spacing:-0.17px;color:#5571ab">507,006</div>
<div class="t" style="left:810.2px;width:63.0px;text-align:right;top:190.4px;font-size:8.6px;letter-spacing:-0.17px;color:#5571ab">505,959</div>
<div class="t" style="left:867.7px;width:61.0px;text-align:right;top:190.4px;font-size:8.6px;letter-spacing:-0.17px;color:#5571ab">510,231</div>
<div class="t" style="left:923.2px;width:62.5px;text-align:right;top:190.4px;font-size:8.6px;letter-spacing:-0.17px;color:#5571ab">505,959</div>
<div class="t" style="left:15.7px;top:202.9px;width:118.30000000000001px;height:11px;overflow:hidden;font-size:8.8px;letter-spacing:-0.25px;color:#4a64a0">Closing Cash</div>
<div class="t" style="left:127.19999999999999px;width:63.5px;text-align:right;top:202.9px;font-size:8.6px;letter-spacing:-0.17px;color:#5571ab">533,378</div>
<div class="t" style="left:185.2px;width:59.0px;text-align:right;top:202.9px;font-size:8.6px;letter-spacing:-0.17px;color:#5571ab">695,346</div>
<div class="t" style="left:238.7px;width:58.0px;text-align:right;top:202.9px;font-size:8.6px;letter-spacing:-0.17px;color:#5571ab">658,744</div>
<div class="t" style="left:291.2px;width:60.0px;text-align:right;top:202.9px;font-size:8.6px;letter-spacing:-0.17px;color:#5571ab">665,533</div>
<div class="t" style="left:345.7px;width:61.5px;text-align:right;top:202.9px;font-size:8.6px;letter-spacing:-0.17px;color:#5571ab">670,753</div>
<div class="t" style="left:401.7px;width:71.0px;text-align:right;top:202.9px;font-size:8.6px;letter-spacing:-0.17px;color:#5571ab">673,610</div>
<div class="t" style="left:467.2px;width:65.5px;text-align:right;top:202.9px;font-size:8.6px;letter-spacing:-0.17px;color:#5571ab">834,490</div>
<div class="t" style="left:527.2px;width:61.5px;text-align:right;top:202.9px;font-size:8.6px;letter-spacing:-0.17px;color:#5571ab">936,193</div>
<div class="t" style="left:583.2px;width:62.0px;text-align:right;top:202.9px;font-size:8.6px;letter-spacing:-0.17px;color:#5571ab">1,011,918</div>
<div class="t" style="left:639.7px;width:62.0px;text-align:right;top:202.9px;font-size:8.6px;letter-spacing:-0.17px;color:#5571ab">1,114,948</div>
<div class="t" style="left:696.2px;width:62.5px;text-align:right;top:202.9px;font-size:8.6px;letter-spacing:-0.17px;color:#5571ab">1,012,748</div>
<div class="t" style="left:753.2px;width:62.5px;text-align:right;top:202.9px;font-size:8.6px;letter-spacing:-0.17px;color:#5571ab">1,014,013</div>
<div class="t" style="left:810.2px;width:63.0px;text-align:right;top:202.9px;font-size:8.6px;letter-spacing:-0.17px;color:#5571ab">1,011,918</div>
<div class="t" style="left:867.7px;width:61.0px;text-align:right;top:202.9px;font-size:8.6px;letter-spacing:-0.17px;color:#5571ab">1,020,462</div>
<div class="t" style="left:923.2px;width:62.5px;text-align:right;top:202.9px;font-size:8.6px;letter-spacing:-0.17px;color:#5571ab">1,011,918</div>
<svg class="ab" style="left:136.7px;top:100.3px" width="4" height="4" viewBox="0 0 4 4"><path d="M0 0 H3.5 L0 3.5Z" fill="#222"/></svg>
<svg class="ab" style="left:136.7px;top:175.3px" width="4" height="4" viewBox="0 0 4 4"><path d="M0 0 H3.5 L0 3.5Z" fill="#222"/></svg>
<div class="ab" style="left:11.2px;top:225.0px;width:980px;height:12.5px;background:#2f5597"></div>
<div class="t" style="left:13.0px;top:227.6px;font-size:8.2px;font-weight:bold;color:#fff">Cash Flow Statement 20 Years to December 2044</div>
<div class="ab" style="left:11.2px;top:244.25px;width:990px;height:232px;border:0.8px solid #e9e9e9;background:#fff"></div>
<svg class="ab" style="left:-17.8px;top:-63.75px" width="1020" height="620" viewBox="0 0 1020 620"><line x1="139.0" y1="461.60" x2="1020" y2="461.60" stroke="#e6e6e6" stroke-width="0.8"/><line x1="139.0" y1="448.40" x2="1020" y2="448.40" stroke="#e6e6e6" stroke-width="0.8"/><line x1="139.0" y1="435.20" x2="1020" y2="435.20" stroke="#e6e6e6" stroke-width="0.8"/><line x1="139.0" y1="422.00" x2="1020" y2="422.00" stroke="#e6e6e6" stroke-width="0.8"/><line x1="139.0" y1="408.80" x2="1020" y2="408.80" stroke="#e6e6e6" stroke-width="0.8"/><line x1="139.0" y1="395.60" x2="1020" y2="395.60" stroke="#e6e6e6" stroke-width="0.8"/><line x1="139.0" y1="382.40" x2="1020" y2="382.40" stroke="#e6e6e6" stroke-width="0.8"/><line x1="139.0" y1="369.20" x2="1020" y2="369.20" stroke="#e6e6e6" stroke-width="0.8"/><line x1="139.0" y1="356.00" x2="1020" y2="356.00" stroke="#e6e6e6" stroke-width="0.8"/><line x1="139.0" y1="342.80" x2="1020" y2="342.80" stroke="#e6e6e6" stroke-width="0.8"/><line x1="139.0" y1="329.60" x2="1020" y2="329.60" stroke="#e6e6e6" stroke-width="0.8"/><line x1="139.0" y1="316.40" x2="1020" y2="316.40" stroke="#e6e6e6" stroke-width="0.8"/><rect x="150.12" y="390.64" width="9.7" height="18.16" fill="#4472c4"/><rect x="162.72" y="379.10" width="9.7" height="29.70" fill="#ed7d31"/><rect x="175.32" y="408.80" width="9.7" height="41.91" fill="#a5a5a5"/><rect x="207.28" y="385.30" width="9.7" height="23.50" fill="#4472c4"/><rect x="232.47" y="408.80" width="9.7" height="13.32" fill="#a5a5a5"/><rect x="264.42" y="387.06" width="9.7" height="21.74" fill="#4472c4"/><rect x="289.62" y="408.80" width="9.7" height="4.17" fill="#a5a5a5"/><rect x="321.57" y="386.84" width="9.7" height="21.96" fill="#4472c4"/><rect x="378.72" y="386.67" width="9.7" height="22.13" fill="#4472c4"/><rect x="435.87" y="386.57" width="9.7" height="22.23" fill="#4472c4"/><rect x="493.02" y="380.71" width="9.7" height="28.09" fill="#4472c4"/><rect x="518.22" y="408.80" width="9.7" height="43.02" fill="#a5a5a5"/><rect x="550.17" y="377.35" width="9.7" height="31.45" fill="#4472c4"/><rect x="575.38" y="408.80" width="9.7" height="13.32" fill="#a5a5a5"/><rect x="607.32" y="375.41" width="9.7" height="33.39" fill="#4472c4"/><rect x="632.52" y="408.80" width="9.7" height="7.50" fill="#a5a5a5"/><rect x="664.47" y="372.01" width="9.7" height="36.79" fill="#4472c4"/><rect x="721.62" y="375.38" width="9.7" height="33.42" fill="#4472c4"/><rect x="778.77" y="375.34" width="9.7" height="33.46" fill="#4472c4"/><rect x="835.92" y="375.41" width="9.7" height="33.39" fill="#4472c4"/><rect x="893.07" y="375.12" width="9.7" height="33.68" fill="#4472c4"/><rect x="950.22" y="375.41" width="9.7" height="33.39" fill="#4472c4"/><polyline points="167.57,373.60 224.72,362.91 281.88,365.32 339.02,364.87 396.18,364.53 453.32,364.34 510.47,353.72 567.62,347.01 624.77,342.01 681.92,335.21 739.07,341.96 796.23,341.88 853.38,342.01 910.52,341.45 967.67,342.01 1024.82,342.01 1081.97,342.01" fill="none" stroke="#5b9bd5" stroke-width="2" stroke-linejoin="round"/><polyline points="167.57,390.64 224.72,385.30 281.88,387.06 339.02,386.84 396.18,386.67 453.32,386.57 510.47,380.71 567.62,377.35 624.77,375.41 681.92,372.01 739.07,375.38 796.23,375.34 853.38,375.41 910.52,375.12 967.67,375.41 1024.82,375.41 1081.97,375.41" fill="none" stroke="#ffc000" stroke-width="2" stroke-linejoin="round"/><line x1="139.0" y1="462.0" x2="1020" y2="462.0" stroke="#d9d9d9" stroke-width="0.8"/><line x1="42.8" y1="474.10" x2="1020" y2="474.10" stroke="#d9d9d9" stroke-width="0.8"/><line x1="42.8" y1="486.55" x2="1020" y2="486.55" stroke="#d9d9d9" stroke-width="0.8"/><line x1="42.8" y1="499.00" x2="1020" y2="499.00" stroke="#d9d9d9" stroke-width="0.8"/><line x1="42.8" y1="511.45" x2="1020" y2="511.45" stroke="#d9d9d9" stroke-width="0.8"/><line x1="42.8" y1="523.90" x2="1020" y2="523.90" stroke="#d9d9d9" stroke-width="0.8"/><line x1="42.8" y1="536.35" x2="1020" y2="536.35" stroke="#d9d9d9" stroke-width="0.8"/><line x1="42.8" y1="474.1" x2="42.8" y2="536.35" stroke="#d9d9d9" stroke-width="0.8"/><line x1="139.00" y1="462.0" x2="139.00" y2="536.35" stroke="#d9d9d9" stroke-width="0.8"/><line x1="196.15" y1="462.0" x2="196.15" y2="536.35" stroke="#d9d9d9" stroke-width="0.8"/><line x1="253.30" y1="462.0" x2="253.30" y2="536.35" stroke="#d9d9d9" stroke-width="0.8"/><line x1="310.45" y1="462.0" x2="310.45" y2="536.35" stroke="#d9d9d9" stroke-width="0.8"/><line x1="367.60" y1="462.0" x2="367.60" y2="536.35" stroke="#d9d9d9" stroke-width="0.8"/><line x1="424.75" y1="462.0" x2="424.75" y2="536.35" stroke="#d9d9d9" stroke-width="0.8"/><line x1="481.90" y1="462.0" x2="481.90" y2="536.35" stroke="#d9d9d9" stroke-width="0.8"/><line x1="539.05" y1="462.0" x2="539.05" y2="536.35" stroke="#d9d9d9" stroke-width="0.8"/><line x1="596.20" y1="462.0" x2="596.20" y2="536.35" stroke="#d9d9d9" stroke-width="0.8"/><line x1="653.35" y1="462.0" x2="653.35" y2="536.35" stroke="#d9d9d9" stroke-width="0.8"/><line x1="710.50" y1="462.0" x2="710.50" y2="536.35" stroke="#d9d9d9" stroke-width="0.8"/><line x1="767.65" y1="462.0" x2="767.65" y2="536.35" stroke="#d9d9d9" stroke-width="0.8"/><line x1="824.80" y1="462.0" x2="824.80" y2="536.35" stroke="#d9d9d9" stroke-width="0.8"/><line x1="881.95" y1="462.0" x2="881.95" y2="536.35" stroke="#d9d9d9" stroke-width="0.8"/><line x1="939.10" y1="462.0" x2="939.10" y2="536.35" stroke="#d9d9d9" stroke-width="0.8"/><line x1="996.25" y1="462.0" x2="996.25" y2="536.35" stroke="#d9d9d9" stroke-width="0.8"/></svg>
<div class="t" style="left:42.2px;width:70.80000000000001px;text-align:right;top:395.25px;font-size:7.1px;color:#595959">(800,000)</div>
<div class="t" style="left:42.2px;width:70.80000000000001px;text-align:right;top:382.04999999999995px;font-size:7.1px;color:#595959">(600,000)</div>
<div class="t" style="left:42.2px;width:70.80000000000001px;text-align:right;top:368.84999999999997px;font-size:7.1px;color:#595959">(400,000)</div>
<div class="t" style="left:42.2px;width:70.80000000000001px;text-align:right;top:355.65px;font-size:7.1px;color:#595959">(200,000)</div>
<div class="t" style="left:42.2px;width:69.60000000000001px;text-align:right;top:342.45px;font-size:7.1px;color:#595959">-</div>
<div class="t" style="left:42.2px;width:69.60000000000001px;text-align:right;top:329.25px;font-size:7.1px;color:#595959">200,000</div>
<div class="t" style="left:42.2px;width:69.60000000000001px;text-align:right;top:316.04999999999995px;font-size:7.1px;color:#595959">400,000</div>
<div class="t" style="left:42.2px;width:69.60000000000001px;text-align:right;top:302.84999999999997px;font-size:7.1px;color:#595959">600,000</div>
<div class="t" style="left:42.2px;width:69.60000000000001px;text-align:right;top:289.65px;font-size:7.1px;color:#595959">800,000</div>
<div class="t" style="left:42.2px;width:69.60000000000001px;text-align:right;top:276.45px;font-size:7.1px;color:#595959">1,000,000</div>
<div class="t" style="left:42.2px;width:69.60000000000001px;text-align:right;top:263.25px;font-size:7.1px;color:#595959">1,200,000</div>
<div class="t" style="left:42.2px;width:69.60000000000001px;text-align:right;top:250.05px;font-size:7.1px;color:#595959">1,400,000</div>
<div class="t" style="left:121.77px;width:56px;text-align:center;top:400.25px;font-size:7px;color:#595959">2025</div>
<div class="t" style="left:178.92px;width:56px;text-align:center;top:400.25px;font-size:7px;color:#595959">2026</div>
<div class="t" style="left:236.07px;width:56px;text-align:center;top:400.25px;font-size:7px;color:#595959">2027</div>
<div class="t" style="left:293.22px;width:56px;text-align:center;top:400.25px;font-size:7px;color:#595959">2028</div>
<div class="t" style="left:350.38px;width:56px;text-align:center;top:400.25px;font-size:7px;color:#595959">2029</div>
<div class="t" style="left:407.52px;width:56px;text-align:center;top:400.25px;font-size:7px;color:#595959">2030</div>
<div class="t" style="left:464.67px;width:56px;text-align:center;top:400.25px;font-size:7px;color:#595959">2031</div>
<div class="t" style="left:521.83px;width:56px;text-align:center;top:400.25px;font-size:7px;color:#595959">2032</div>
<div class="t" style="left:578.98px;width:56px;text-align:center;top:400.25px;font-size:7px;color:#595959">2033</div>
<div class="t" style="left:636.12px;width:56px;text-align:center;top:400.25px;font-size:7px;color:#595959">2034</div>
<div class="t" style="left:693.27px;width:56px;text-align:center;top:400.25px;font-size:7px;color:#595959">2035</div>
<div class="t" style="left:750.43px;width:56px;text-align:center;top:400.25px;font-size:7px;color:#595959">2036</div>
<div class="t" style="left:807.58px;width:56px;text-align:center;top:400.25px;font-size:7px;color:#595959">2037</div>
<div class="t" style="left:864.73px;width:56px;text-align:center;top:400.25px;font-size:7px;color:#595959">2038</div>
<div class="t" style="left:921.88px;width:56px;text-align:center;top:400.25px;font-size:7px;color:#595959">2039</div>
<div class="ab" style="left:27.5px;top:414.59px;width:18.5px;height:4px;background:#4472c4"></div>
<div class="t" style="left:48.5px;top:413.09px;font-size:6.85px;color:#595959">Operating Cash Flows</div>
<div class="t" style="left:121.77px;width:56px;text-align:center;top:413.09px;font-size:7.1px;letter-spacing:-0.15px;color:#595959">275,098</div>
<div class="t" style="left:178.92px;width:56px;text-align:center;top:413.09px;font-size:7.1px;letter-spacing:-0.15px;color:#595959">356,082</div>
<div class="t" style="left:236.07px;width:56px;text-align:center;top:413.09px;font-size:7.1px;letter-spacing:-0.15px;color:#595959">329,372</div>
<div class="t" style="left:293.22px;width:56px;text-align:center;top:413.09px;font-size:7.1px;letter-spacing:-0.15px;color:#595959">332,766</div>
<div class="t" style="left:350.38px;width:56px;text-align:center;top:413.09px;font-size:7.1px;letter-spacing:-0.15px;color:#595959">335,376</div>
<div class="t" style="left:407.52px;width:56px;text-align:center;top:413.09px;font-size:7.1px;letter-spacing:-0.15px;color:#595959">336,805</div>
<div class="t" style="left:464.67px;width:56px;text-align:center;top:413.09px;font-size:7.1px;letter-spacing:-0.15px;color:#595959">425,654</div>
<div class="t" style="left:521.83px;width:56px;text-align:center;top:413.09px;font-size:7.1px;letter-spacing:-0.15px;color:#595959">476,506</div>
<div class="t" style="left:578.98px;width:56px;text-align:center;top:413.09px;font-size:7.1px;letter-spacing:-0.15px;color:#595959">505,959</div>
<div class="t" style="left:636.12px;width:56px;text-align:center;top:413.09px;font-size:7.1px;letter-spacing:-0.15px;color:#595959">557,474</div>
<div class="t" style="left:693.27px;width:56px;text-align:center;top:413.09px;font-size:7.1px;letter-spacing:-0.15px;color:#595959">506,374</div>
<div class="t" style="left:750.43px;width:56px;text-align:center;top:413.09px;font-size:7.1px;letter-spacing:-0.15px;color:#595959">507,006</div>
<div class="t" style="left:807.58px;width:56px;text-align:center;top:413.09px;font-size:7.1px;letter-spacing:-0.15px;color:#595959">505,959</div>
<div class="t" style="left:864.73px;width:56px;text-align:center;top:413.09px;font-size:7.1px;letter-spacing:-0.15px;color:#595959">510,231</div>
<div class="t" style="left:921.88px;width:56px;text-align:center;top:413.09px;font-size:7.1px;letter-spacing:-0.15px;color:#595959">505,959</div>
<div class="ab" style="left:27.5px;top:427.04px;width:18.5px;height:4px;background:#ed7d31"></div>
<div class="t" style="left:48.5px;top:425.54px;font-size:6.85px;color:#595959">Investing Cash Flows</div>
<div class="t" style="left:121.77px;width:56px;text-align:center;top:425.54px;font-size:7.1px;letter-spacing:-0.15px;color:#595959">450,000</div>
<div class="t" style="left:178.92px;width:56px;text-align:center;top:425.54px;font-size:7.1px;letter-spacing:-0.15px;color:#595959">-</div>
<div class="t" style="left:236.07px;width:56px;text-align:center;top:425.54px;font-size:7.1px;letter-spacing:-0.15px;color:#595959">-</div>
<div class="t" style="left:293.22px;width:56px;text-align:center;top:425.54px;font-size:7.1px;letter-spacing:-0.15px;color:#595959">-</div>
<div class="t" style="left:350.38px;width:56px;text-align:center;top:425.54px;font-size:7.1px;letter-spacing:-0.15px;color:#595959">-</div>
<div class="t" style="left:407.52px;width:56px;text-align:center;top:425.54px;font-size:7.1px;letter-spacing:-0.15px;color:#595959">-</div>
<div class="t" style="left:464.67px;width:56px;text-align:center;top:425.54px;font-size:7.1px;letter-spacing:-0.15px;color:#595959">-</div>
<div class="t" style="left:521.83px;width:56px;text-align:center;top:425.54px;font-size:7.1px;letter-spacing:-0.15px;color:#595959">-</div>
<div class="t" style="left:578.98px;width:56px;text-align:center;top:425.54px;font-size:7.1px;letter-spacing:-0.15px;color:#595959">-</div>
<div class="t" style="left:636.12px;width:56px;text-align:center;top:425.54px;font-size:7.1px;letter-spacing:-0.15px;color:#595959">-</div>
<div class="t" style="left:693.27px;width:56px;text-align:center;top:425.54px;font-size:7.1px;letter-spacing:-0.15px;color:#595959">-</div>
<div class="t" style="left:750.43px;width:56px;text-align:center;top:425.54px;font-size:7.1px;letter-spacing:-0.15px;color:#595959">-</div>
<div class="t" style="left:807.58px;width:56px;text-align:center;top:425.54px;font-size:7.1px;letter-spacing:-0.15px;color:#595959">-</div>
<div class="t" style="left:864.73px;width:56px;text-align:center;top:425.54px;font-size:7.1px;letter-spacing:-0.15px;color:#595959">-</div>
<div class="t" style="left:921.88px;width:56px;text-align:center;top:425.54px;font-size:7.1px;letter-spacing:-0.15px;color:#595959">-</div>
<div class="ab" style="left:27.5px;top:439.49px;width:18.5px;height:4px;background:#a5a5a5"></div>
<div class="t" style="left:48.5px;top:437.99px;font-size:6.85px;color:#595959">Financing Cash Flows</div>
<div class="t" style="left:121.77px;width:56px;text-align:center;top:437.99px;font-size:7.1px;letter-spacing:-0.15px;color:#595959">(634,998)</div>
<div class="t" style="left:178.92px;width:56px;text-align:center;top:437.99px;font-size:7.1px;letter-spacing:-0.15px;color:#595959">(201,816)</div>
<div class="t" style="left:236.07px;width:56px;text-align:center;top:437.99px;font-size:7.1px;letter-spacing:-0.15px;color:#595959">(63,186)</div>
<div class="t" style="left:293.22px;width:56px;text-align:center;top:437.99px;font-size:7.1px;letter-spacing:-0.15px;color:#595959">-</div>
<div class="t" style="left:350.38px;width:56px;text-align:center;top:437.99px;font-size:7.1px;letter-spacing:-0.15px;color:#595959">-</div>
<div class="t" style="left:407.52px;width:56px;text-align:center;top:437.99px;font-size:7.1px;letter-spacing:-0.15px;color:#595959">-</div>
<div class="t" style="left:464.67px;width:56px;text-align:center;top:437.99px;font-size:7.1px;letter-spacing:-0.15px;color:#595959">(651,816)</div>
<div class="t" style="left:521.83px;width:56px;text-align:center;top:437.99px;font-size:7.1px;letter-spacing:-0.15px;color:#595959">(201,816)</div>
<div class="t" style="left:578.98px;width:56px;text-align:center;top:437.99px;font-size:7.1px;letter-spacing:-0.15px;color:#595959">(113,640)</div>
<div class="t" style="left:636.12px;width:56px;text-align:center;top:437.99px;font-size:7.1px;letter-spacing:-0.15px;color:#595959">-</div>
<div class="t" style="left:693.27px;width:56px;text-align:center;top:437.99px;font-size:7.1px;letter-spacing:-0.15px;color:#595959">-</div>
<div class="t" style="left:750.43px;width:56px;text-align:center;top:437.99px;font-size:7.1px;letter-spacing:-0.15px;color:#595959">-</div>
<div class="t" style="left:807.58px;width:56px;text-align:center;top:437.99px;font-size:7.1px;letter-spacing:-0.15px;color:#595959">-</div>
<div class="t" style="left:864.73px;width:56px;text-align:center;top:437.99px;font-size:7.1px;letter-spacing:-0.15px;color:#595959">-</div>
<div class="t" style="left:921.88px;width:56px;text-align:center;top:437.99px;font-size:7.1px;letter-spacing:-0.15px;color:#595959">-</div>
<div class="ab" style="left:27.5px;top:452.94px;width:18.5px;height:2.2px;background:#ffc000"></div>
<div class="t" style="left:48.5px;top:450.44px;font-size:6.85px;color:#595959">Change In Cash Held</div>
<div class="t" style="left:121.77px;width:56px;text-align:center;top:450.44px;font-size:7.1px;letter-spacing:-0.15px;color:#595959">275,098</div>
<div class="t" style="left:178.92px;width:56px;text-align:center;top:450.44px;font-size:7.1px;letter-spacing:-0.15px;color:#595959">356,082</div>
<div class="t" style="left:236.07px;width:56px;text-align:center;top:450.44px;font-size:7.1px;letter-spacing:-0.15px;color:#595959">329,372</div>
<div class="t" style="left:293.22px;width:56px;text-align:center;top:450.44px;font-size:7.1px;letter-spacing:-0.15px;color:#595959">332,766</div>
<div class="t" style="left:350.38px;width:56px;text-align:center;top:450.44px;font-size:7.1px;letter-spacing:-0.15px;color:#595959">335,376</div>
<div class="t" style="left:407.52px;width:56px;text-align:center;top:450.44px;font-size:7.1px;letter-spacing:-0.15px;color:#595959">336,805</div>
<div class="t" style="left:464.67px;width:56px;text-align:center;top:450.44px;font-size:7.1px;letter-spacing:-0.15px;color:#595959">425,654</div>
<div class="t" style="left:521.83px;width:56px;text-align:center;top:450.44px;font-size:7.1px;letter-spacing:-0.15px;color:#595959">476,506</div>
<div class="t" style="left:578.98px;width:56px;text-align:center;top:450.44px;font-size:7.1px;letter-spacing:-0.15px;color:#595959">505,959</div>
<div class="t" style="left:636.12px;width:56px;text-align:center;top:450.44px;font-size:7.1px;letter-spacing:-0.15px;color:#595959">557,474</div>
<div class="t" style="left:693.27px;width:56px;text-align:center;top:450.44px;font-size:7.1px;letter-spacing:-0.15px;color:#595959">506,374</div>
<div class="t" style="left:750.43px;width:56px;text-align:center;top:450.44px;font-size:7.1px;letter-spacing:-0.15px;color:#595959">507,006</div>
<div class="t" style="left:807.58px;width:56px;text-align:center;top:450.44px;font-size:7.1px;letter-spacing:-0.15px;color:#595959">505,959</div>
<div class="t" style="left:864.73px;width:56px;text-align:center;top:450.44px;font-size:7.1px;letter-spacing:-0.15px;color:#595959">510,231</div>
<div class="t" style="left:921.88px;width:56px;text-align:center;top:450.44px;font-size:7.1px;letter-spacing:-0.15px;color:#595959">505,959</div>
<div class="ab" style="left:27.5px;top:465.39px;width:18.5px;height:2.2px;background:#5b9bd5"></div>
<div class="t" style="left:48.5px;top:462.89px;font-size:6.85px;color:#595959">Closing Cash</div>
<div class="t" style="left:121.77px;width:56px;text-align:center;top:462.89px;font-size:7.1px;letter-spacing:-0.15px;color:#595959">533,378</div>
<div class="t" style="left:178.92px;width:56px;text-align:center;top:462.89px;font-size:7.1px;letter-spacing:-0.15px;color:#595959">695,346</div>
<div class="t" style="left:236.07px;width:56px;text-align:center;top:462.89px;font-size:7.1px;letter-spacing:-0.15px;color:#595959">658,744</div>
<div class="t" style="left:293.22px;width:56px;text-align:center;top:462.89px;font-size:7.1px;letter-spacing:-0.15px;color:#595959">665,533</div>
<div class="t" style="left:350.38px;width:56px;text-align:center;top:462.89px;font-size:7.1px;letter-spacing:-0.15px;color:#595959">670,753</div>
<div class="t" style="left:407.52px;width:56px;text-align:center;top:462.89px;font-size:7.1px;letter-spacing:-0.15px;color:#595959">673,610</div>
<div class="t" style="left:464.67px;width:56px;text-align:center;top:462.89px;font-size:7.1px;letter-spacing:-0.15px;color:#595959">834,490</div>
<div class="t" style="left:521.83px;width:56px;text-align:center;top:462.89px;font-size:7.1px;letter-spacing:-0.15px;color:#595959">936,193</div>
<div class="t" style="left:578.98px;width:56px;text-align:center;top:462.89px;font-size:7.1px;letter-spacing:-0.15px;color:#595959">1,011,918</div>
<div class="t" style="left:636.12px;width:56px;text-align:center;top:462.89px;font-size:7.1px;letter-spacing:-0.15px;color:#595959">1,114,948</div>
<div class="t" style="left:693.27px;width:56px;text-align:center;top:462.89px;font-size:7.1px;letter-spacing:-0.15px;color:#595959">1,012,748</div>
<div class="t" style="left:750.43px;width:56px;text-align:center;top:462.89px;font-size:7.1px;letter-spacing:-0.15px;color:#595959">1,014,013</div>
<div class="t" style="left:807.58px;width:56px;text-align:center;top:462.89px;font-size:7.1px;letter-spacing:-0.15px;color:#595959">1,011,918</div>
<div class="t" style="left:864.73px;width:56px;text-align:center;top:462.89px;font-size:7.1px;letter-spacing:-0.15px;color:#595959">1,020,462</div>
<div class="t" style="left:921.88px;width:56px;text-align:center;top:462.89px;font-size:7.1px;letter-spacing:-0.15px;color:#595959">1,011,918</div>
</div>
<div class="ab" style="left:987.8px;top:51px;width:12.2px;height:509px;background:#f5f5f5;border-left:0.8px solid #e0e0e0"></div>
<svg class="ab" style="left:991px;top:53.5px" width="7" height="5" viewBox="0 0 7 5"><path d="M0.5 4.5 L3.5 0.5 L6.5 4.5Z" fill="#555"/></svg>
<div class="ab" style="left:991.4px;top:62.2px;width:5.6px;height:142px;background:#6e6e6e;border-radius:3px"></div>
<svg class="ab" style="left:991px;top:553px" width="7" height="5" viewBox="0 0 7 5"><path d="M0.5 0.5 L3.5 4.5 L6.5 0.5Z" fill="#555"/></svg>
<div class="ab" style="left:0;top:559.8px;width:1000px;height:17.2px;background:#eaebed"></div>
<svg class="ab" style="left:16px;top:564.5px" width="6" height="8" viewBox="0 0 6 8"><path d="M4.5 0.5 L1.5 4 L4.5 7.5" fill="none" stroke="#b0b0b0" stroke-width="1"/></svg>
<svg class="ab" style="left:36.5px;top:564.5px" width="6" height="8" viewBox="0 0 6 8"><path d="M1.5 0.5 L4.5 4 L1.5 7.5" fill="none" stroke="#444" stroke-width="1"/></svg>
<div class="t" style="left:79px;top:565.2px;font-size:9.1px;color:#333">How To</div>
<div class="ab" style="left:120.7px;top:561px;width:59.3px;height:16px;background:#ffff99"></div>
<div class="t" style="left:120.7px;width:59.3px;text-align:center;top:565.2px;font-size:9.1px;color:#333">Inputs 2025</div>
<div class="ab" style="left:186px;top:561px;width:40px;height:16px;background:#ffff99"></div>
<div class="t" style="left:186px;width:40px;text-align:center;top:565.2px;font-size:9.1px;color:#333">IS 2025</div>
<div class="ab" style="left:233px;top:561px;width:42.5px;height:16px;background:#ffff99"></div>
<div class="t" style="left:233px;width:42.5px;text-align:center;top:565.2px;font-size:9.1px;color:#333">CF 2025</div>
<div class="t" style="left:281px;width:45px;text-align:center;top:565.2px;font-size:9.1px;color:#333">BS 2025</div>
<div class="ab" style="left:457.8px;top:561px;width:62.19999999999999px;height:16px;background:#ffff99"></div>
<div class="t" style="left:457.8px;width:62.19999999999999px;text-align:center;top:565.2px;font-size:9.1px;color:#333">CAPEX 2025</div>
<div class="ab" style="left:524px;top:561px;width:57px;height:16px;background:#ffff99"></div>
<div class="t" style="left:524px;width:57px;text-align:center;top:565.2px;font-size:9.1px;color:#333">OPEX 2025</div>
<div class="ab" style="left:586px;top:561px;width:60.5px;height:16px;background:#ffff99"></div>
<div class="t" style="left:586px;width:60.5px;text-align:center;top:565.2px;font-size:9.1px;color:#333">Inputs 2026</div>
<div class="ab" style="left:651.6px;top:561px;width:42.39999999999998px;height:16px;background:#ffff99"></div>
<div class="t" style="left:651.6px;width:42.39999999999998px;text-align:center;top:565.2px;font-size:9.1px;color:#333">IS 2026</div>
<div class="ab" style="left:697.4px;top:561px;width:43.60000000000002px;height:16px;background:#ffff99"></div>
<div class="t" style="left:697.4px;width:43.60000000000002px;text-align:center;top:565.2px;font-size:9.1px;color:#333">CF 2026</div>
<div class="t" style="left:747px;width:43px;text-align:center;top:565.2px;font-size:9.1px;color:#333">BS 2026</div>
<div class="ab" style="left:328.5px;top:558.6px;width:126px;height:18.7px;background:#fff"></div>
<div class="t" style="left:337px;top:564px;font-size:8.5px;font-weight:bold;color:#222">Statements Summary 2025</div>
<div class="ab" style="left:337px;top:574.3px;width:110.5px;height:1.3px;background:#217346"></div>
<div class="t" style="left:803px;top:565.2px;width:78px;height:11px;overflow:hidden;font-size:9.1px;color:#333">Statements Summa</div>
<div class="ab" style="left:886.8px;top:568.6px;width:1.6px;height:1.6px;background:#333"></div>
<div class="ab" style="left:889.4px;top:568.6px;width:1.6px;height:1.6px;background:#333"></div>
<div class="ab" style="left:892.0px;top:568.6px;width:1.6px;height:1.6px;background:#333"></div>
<svg class="ab" style="left:907px;top:565.5px" width="9" height="9" viewBox="0 0 9 9"><path d="M4.5 0 V9 M0 4.5 H9" stroke="#333" stroke-width="1"/></svg>
<div class="ab" style="left:931px;top:565.2px;width:1.4px;height:1.4px;background:#333;border-radius:50%"></div>
<div class="ab" style="left:931px;top:567.8000000000001px;width:1.4px;height:1.4px;background:#333;border-radius:50%"></div>
<div class="ab" style="left:931px;top:570.4000000000001px;width:1.4px;height:1.4px;background:#333;border-radius:50%"></div>
<svg class="ab" style="left:945.5px;top:565.5px" width="5" height="6" viewBox="0 0 5 6"><path d="M4.5 0 L0.5 3 L4.5 6Z" fill="#444"/></svg>
<div class="ab" style="left:952px;top:566px;width:14px;height:5px;background:#555;border-radius:2.5px"></div>
<svg class="ab" style="left:981px;top:565.5px" width="5" height="6" viewBox="0 0 5 6"><path d="M0.5 0 L4.5 3 L0.5 6Z" fill="#444"/></svg>
<div class="ab" style="left:0;top:577px;width:1000px;height:14px;background:#f3f3f3;border-top:0.8px solid #e2e2e2"></div>
<div class="t" style="left:7.5px;top:584.8px;font-size:6.6px;color:#444">Ready</div>
<div class="ab" style="left:39.5px;top:583.5px;width:8.5px;height:7.5px;border:1px solid #555;background:#888"></div>
<svg class="ab" style="left:61px;top:582.5px" width="9" height="9" viewBox="0 0 9 9"><circle cx="4.5" cy="1.8" r="1.2" fill="#444"/><path d="M1 3.5 H8 M4.5 3.5 V6 L2.5 8.5 M4.5 6 L6.5 8.5" fill="none" stroke="#444" stroke-width="0.9"/></svg>
<div class="t" style="left:71.4px;top:584.8px;font-size:6.7px;font-weight:bold;color:#222">Accessibility: Investigate</div>
<div class="ab" style="left:811px;top:580.5px;width:15.6px;height:10.5px;background:#d6d6d6"></div>
<svg class="ab" style="left:814px;top:581.5px" width="9" height="8" viewBox="0 0 9 8"><rect x="0.5" y="0.5" width="8" height="7" fill="none" stroke="#444" stroke-width="0.8"/>
<path d="M0.5 2.8 H8.5 M0.5 5.2 H8.5 M3.2 0.5 V7.5 M5.8 0.5 V7.5" stroke="#444" stroke-width="0.6"/></svg>
<svg class="ab" style="left:841px;top:581.5px" width="9" height="8" viewBox="0 0 9 8"><rect x="0.5" y="0.5" width="8" height="7" fill="none" stroke="#444" stroke-width="0.8"/>
<path d="M2.5 2 H6.5 M2.5 3.5 H6.5 M2.5 5 H6.5" stroke="#444" stroke-width="0.6"/></svg>
<svg class="ab" style="left:867px;top:581.5px" width="9" height="8" viewBox="0 0 9 8"><rect x="0.5" y="0.5" width="8" height="7" fill="none" stroke="#444" stroke-width="0.8"/>
<path d="M4.5 0.5 V7.5 M0.5 4 H8.5" stroke="#444" stroke-width="0.6"/></svg>
<div class="ab" style="left:887.5px;top:585.8px;width:4px;height:0.8px;background:#555"></div>
<div class="ab" style="left:893px;top:585.8px;width:72px;height:0.8px;background:#777"></div>
<div class="ab" style="left:928.5px;top:582px;width:2px;height:8px;background:#444"></div>
<div class="t" style="left:965.5px;top:582px;font-size:7px;color:#555">+</div>
<div class="t" style="left:977.5px;top:584px;font-size:6.3px;color:#444">100%</div>
</body></html>
